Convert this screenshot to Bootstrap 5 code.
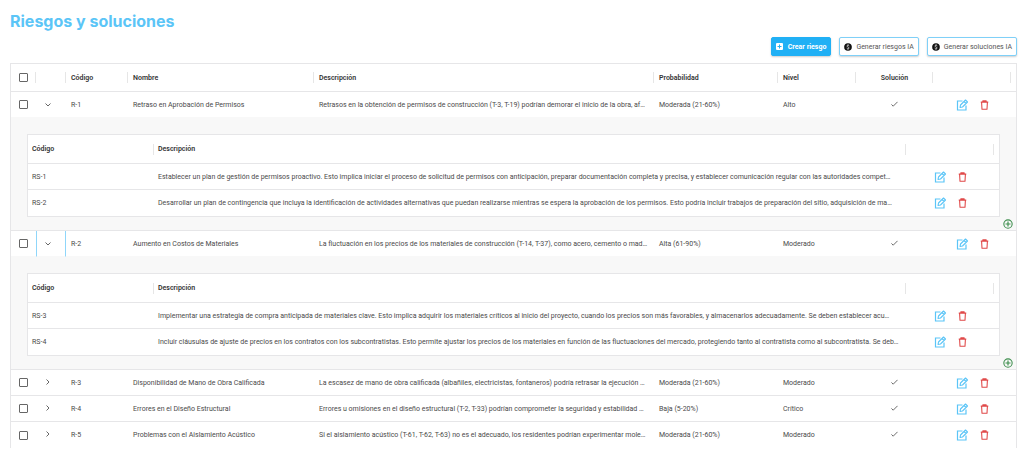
<!DOCTYPE html>
<html lang="es">
<head>
<meta charset="utf-8">
<meta name="viewport" content="width=device-width, initial-scale=1">
<title>Riesgos y soluciones</title>
<link href="https://cdn.jsdelivr.net/npm/bootstrap@5.3.0/dist/css/bootstrap.min.css" rel="stylesheet">
<style>
  :root { --sky: #5bc5f7; --azure: #20b0f5; --line: #e6e6e8; }
  body { font-family: Roboto, "Liberation Sans", sans-serif; font-size: 7px; line-height: 10px; color: #4a4a4a; background: #fff; }
  .page { padding: 11px 7px 16px 10px; }
  .page-title { font-family: Inter, "Open Sans", sans-serif; font-size: 16px; line-height: 20px; font-weight: 700; color: var(--sky); }
  .toolbar { margin: 6px 0 7px; gap: 8px; }
  .toolbar .btn { font-size: 7px; line-height: 10px; height: 19px; padding: 0 4px; border-radius: 2px; gap: 4px; color: #555; border: 1px solid #7fd0f8; box-shadow: 0 1px 2px rgba(0,0,0,.2); background: #fff; }
  .toolbar .btn-create { gap: 5px; color: #fff; font-weight: 700; background: var(--azure); border-color: var(--azure); }

  .risk-table { --bs-table-bg: #fff; table-layout: fixed; font-size: 7px; color: #4a4a4a; border: 1px solid var(--line); border-collapse: separate; border-spacing: 0; }
  .main-grid { border-bottom: 0; }
  .risk-table > thead > tr > th, .risk-table > tbody > tr > td { padding: 0 5px; color: inherit; vertical-align: middle; white-space: nowrap; overflow: hidden; border-bottom: 1px solid var(--line); box-shadow: none; }
  .risk-table > thead > tr > th { height: 28px; font-weight: 600; color: #333; background: linear-gradient(#e6e6e6, #e6e6e6) right center / 1px 11px no-repeat #fff; }
  .risk-table > thead > tr > th:last-child { background: #fff; }
  .risk-table > tbody > tr > td { height: 26px; }
  .risk-table > tbody > tr:last-child > td { border-bottom: 0; }
  .risk-table > tbody > tr.open > td { border-bottom-color: #f8f8f8; }
  .risk-table > tbody > tr > td.toggle { padding-right: 11px; }
  .risk-table > tbody > tr > td.focused { border-left: 1px solid #8fd6fa; border-right: 1px solid #8fd6fa; }
  .risk-table > tbody > tr > td.detail { height: auto; padding: 16px 16px 0; background: #f8f8f8; }
  .sub-grid > thead > tr > th, .sub-grid > tbody > tr > td { padding: 0 4px; }
  .sub-grid > thead > tr > th { height: 29px; }
  .detail-foot { height: 13px; margin-right: -13px; }

  .w-check { width: 25px; } .w-toggle { width: 30px; } .w-code { width: 62px; } .w-name { width: 186px; }
  .w-prob { width: 124px; } .w-level { width: 78px; } .w-sol { width: 77px; } .w-act { width: 78px; }
  .w-end { width: 5px; } .w-subcode { width: 126px; } .w-subact { width: 88px; }

  .pick { appearance: none; display: block; width: 9px; height: 9px; margin: 0 auto; border: 1px solid #666; border-radius: 1px; background: #fff; }
  .pick:checked { background: var(--azure); }
  .glyph { border: 0; padding: 0; background: none; display: inline-flex; }
  .glyph-row { gap: 12px; }
  .edit { color: var(--sky); } .del { color: #e04848; } .add { color: #3f8f4f; } .tick, .chev { color: #666; }
  svg { display: block; fill: none; stroke: currentColor; }
</style>
</head>
<body>
<svg width="0" height="0" class="d-none" aria-hidden="true">
  <symbol id="i-edit" viewBox="0 0 24 24"><path d="M13 4H3v18h17v-9" stroke-width="2.4"/><path d="M8 17l1-5L19 2l4 4-10 10zM16 5l4 4" stroke-width="2.2" stroke-linejoin="round"/></symbol>
  <symbol id="i-del" viewBox="0 0 20 24"><path d="M1 5h18M6 5V2h8v3M3 5l1 17h12l1-17" stroke-width="2.6" stroke-linejoin="round"/></symbol>
  <symbol id="i-tick" viewBox="0 0 16 12"><path d="M1 7l4 4L15 1" stroke-width="2.2"/></symbol>
  <symbol id="i-down" viewBox="0 0 12 8"><path d="M1 1l5 5 5-5" stroke-width="2"/></symbol>
  <symbol id="i-right" viewBox="0 0 8 12"><path d="M1 1l5 5-5 5" stroke-width="2"/></symbol>
  <symbol id="i-add" viewBox="0 0 24 24"><circle cx="12" cy="12" r="10" stroke-width="2.6"/><path d="M12 6v12M6 12h12" stroke-width="2.8"/></symbol>
  <symbol id="i-coin" viewBox="0 0 24 24"><circle cx="12" cy="12" r="11.5" fill="#111" stroke="none"/><path d="M16 8.500C15 6 9 6 8.500 9c0 3.500 7 2.500 7 6 0 3-6 3.500-7.500.500M12 4v3M12 17v3" stroke="#fff" stroke-width="2"/></symbol>
</svg>

<main class="page">
  <h1 class="page-title mb-0">Riesgos y soluciones</h1>

  <div class="toolbar d-flex justify-content-end">
    <button type="button" class="btn btn-create d-inline-flex align-items-center"><svg width="7" height="7" viewBox="0 0 14 14"><rect width="14" height="14" rx="2" fill="#fff" stroke="none"/><path d="M7 3v8M3 7h8" stroke="#20b0f5" stroke-width="2"/></svg>Crear riesgo</button>
    <button type="button" class="btn d-inline-flex align-items-center"><svg width="8" height="8"><use href="#i-coin"/></svg>Generar riesgos IA</button>
    <button type="button" class="btn d-inline-flex align-items-center"><svg width="8" height="8"><use href="#i-coin"/></svg>Generar soluciones IA</button>
  </div>

  <table class="table risk-table main-grid mb-0">
    <colgroup><col class="w-check"><col class="w-toggle"><col class="w-code"><col class="w-name"><col><col class="w-prob"><col class="w-level"><col class="w-sol"><col class="w-act"><col class="w-end"></colgroup>
    <thead>
      <tr><th class="px-0"><input type="checkbox" class="pick" aria-label="Seleccionar todo"></th><th></th><th>Código</th><th>Nombre</th><th>Descripción</th><th>Probabilidad</th><th>Nivel</th><th class="text-center">Solución</th><th></th><th class="p-0"></th></tr>
    </thead>
    <tbody id="risks"></tbody>
  </table>
</main>

<script src="https://cdn.jsdelivr.net/npm/bootstrap@5.3.0/dist/js/bootstrap.bundle.min.js"></script>
<script>
  const risks = [
    { code: 'R-1', name: 'Retraso en Aprobación de Permisos', text: 'Retrasos en la obtención de permisos de construcción (T-3, T-19) podrían demorar el inicio de la obra, af…', prob: 'Moderada (21-60%)', level: 'Alto', subs: [
      ['RS-1', 'Establecer un plan de gestión de permisos proactivo. Esto implica iniciar el proceso de solicitud de permisos con anticipación, preparar documentación completa y precisa, y establecer comunicación regular con las autoridades compet…'],
      ['RS-2', 'Desarrollar un plan de contingencia que incluya la identificación de actividades alternativas que puedan realizarse mientras se espera la aprobación de los permisos. Esto podría incluir trabajos de preparación del sitio, adquisición de ma…']] },
    { code: 'R-2', name: 'Aumento en Costos de Materiales', text: 'La fluctuación en los precios de los materiales de construcción (T-14, T-37), como acero, cemento o mad…', prob: 'Alta (61-90%)', level: 'Moderado', focused: true, subs: [
      ['RS-3', 'Implementar una estrategia de compra anticipada de materiales clave. Esto implica adquirir los materiales críticos al inicio del proyecto, cuando los precios son más favorables, y almacenarlos adecuadamente. Se deben establecer acu…'],
      ['RS-4', 'Incluir cláusulas de ajuste de precios en los contratos con los subcontratistas. Esto permite ajustar los precios de los materiales en función de las fluctuaciones del mercado, protegiendo tanto al contratista como al subcontratista. Se deb…']] },
    { code: 'R-3', name: 'Disponibilidad de Mano de Obra Calificada', text: 'La escasez de mano de obra calificada (albañiles, electricistas, fontaneros) podría retrasar la ejecución …', prob: 'Moderada (21-60%)', level: 'Moderado' },
    { code: 'R-4', name: 'Errores en el Diseño Estructural', text: 'Errores u omisiones en el diseño estructural (T-2, T-33) podrían comprometer la seguridad y estabilidad …', prob: 'Baja (5-20%)', level: 'Crítico' },
    { code: 'R-5', name: 'Problemas con el Aislamiento Acústico', text: 'Si el aislamiento acústico (T-61, T-62, T-63) no es el adecuado, los residentes podrían experimentar mole…', prob: 'Moderada (21-60%)', level: 'Moderado' }
  ];
  const icon = (id, w, h) => `<svg width="${w}" height="${h}"><use href="#i-${id}"/></svg>`;
  const actions = `<div class="glyph-row d-flex justify-content-center align-items-center">
    <button type="button" class="glyph edit" aria-label="Editar">${icon('edit', 12, 12)}</button>
    <button type="button" class="glyph del" aria-label="Eliminar">${icon('del', 9, 10)}</button></div>`;
  const detail = r => `<tr><td colspan="10" class="detail">
    <table class="table risk-table sub-grid mb-0">
      <colgroup><col class="w-subcode"><col><col class="w-subact"><col class="w-end"></colgroup>
      <thead><tr><th>Código</th><th>Descripción</th><th></th><th class="p-0"></th></tr></thead>
      <tbody>${r.subs.map(s => `<tr><td>${s[0]}</td><td>${s[1]}</td><td>${actions}</td><td class="p-0"></td></tr>`).join('')}</tbody>
    </table>
    <div class="detail-foot d-flex justify-content-end align-items-center">
      <button type="button" class="glyph add" aria-label="Añadir solución">${icon('add', 10, 10)}</button>
    </div></td></tr>`;
  document.getElementById('risks').innerHTML = risks.map(r => `
    <tr class="${r.subs ? 'open' : ''}">
      <td class="px-0"><input type="checkbox" class="pick" aria-label="Seleccionar ${r.code}"></td>
      <td class="toggle text-center ${r.focused ? 'focused' : ''}"><button type="button" class="glyph chev" aria-label="Detalle">${r.subs ? icon('down', 6, 4) : icon('right', 4, 6)}</button></td>
      <td>${r.code}</td><td>${r.name}</td><td>${r.text}</td><td>${r.prob}</td><td>${r.level}</td>
      <td class="text-center"><span class="glyph tick">${icon('tick', 7, 6)}</span></td>
      <td>${actions}</td><td class="p-0"></td>
    </tr>${r.subs ? detail(r) : ''}`).join('');
</script>
</body>
</html>
